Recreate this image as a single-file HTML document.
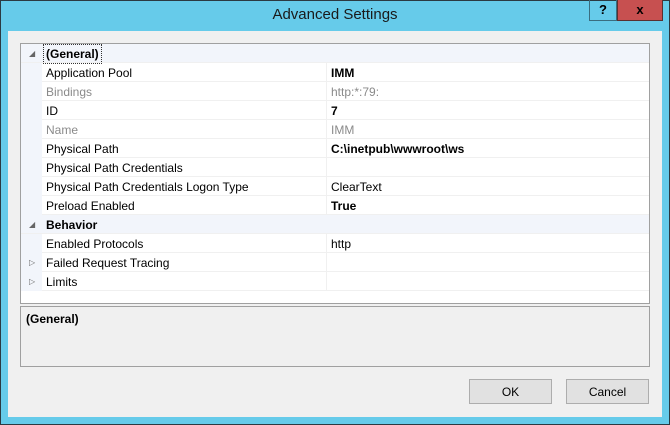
<!DOCTYPE html>
<html><head><style>
*{margin:0;padding:0;box-sizing:border-box}
body{width:670px;height:425px;background:#66cbea;position:relative;overflow:hidden;font-family:"Segoe UI","Liberation Sans",sans-serif;font-size:12px;color:#000}
.frame{position:absolute;left:0;top:0;width:670px;height:425px;border:1px solid #2b3a42}
.title{position:absolute;left:0;top:6px;width:670px;text-align:center;font-size:15px;color:#1a1a1a}
.help{position:absolute;left:589px;top:0;width:28px;height:21px;border:1px solid #3a6d80;border-top:none;text-align:center;font-weight:bold;font-size:13px;line-height:20px}
.close{position:absolute;left:617px;top:0;width:46px;height:21px;background:#c75050;border:1px solid #5a3030;border-top:none;text-align:center;font-weight:bold;font-size:13px;line-height:19px}
.client{position:absolute;left:8px;top:31px;width:654px;height:386px;background:#f0f0f0}
.grid{position:absolute;left:20px;top:43px;width:630px;height:261px;background:#fff;border:1px solid #a0a0a0}
.row{position:absolute;left:0;width:628px;height:19px;border-bottom:1px solid #f0f0f0;line-height:20px}
.gut{position:absolute;left:0;top:0;width:21px;height:19px;background:#f2f5fb}
.hdr{background:#f2f5fb;font-weight:bold}
.n{position:absolute;left:25px;top:0}
.v{position:absolute;left:310px;top:0}
.sep{position:absolute;left:305px;top:0;width:1px;height:19px;background:#f0f0f0}
.g{color:#8a8a8a}
.b{font-weight:bold}
.arr{position:absolute;left:8px;top:0;font-size:8px;color:#666;font-weight:normal}
.desc{position:absolute;left:20px;top:306px;width:630px;height:61px;border:1px solid #a0a0a0;font-weight:bold;padding:5px 5px}
.btn{position:absolute;top:379px;width:83px;height:25px;background:#e1e1e1;border:1px solid #adadad;text-align:center;line-height:24px}
</style></head><body>
<div class="frame"></div>
<div class="title">Advanced Settings</div>
<div class="help">?</div>
<div class="close">x</div>
<div class="client"></div>
<div class="grid">
<div class="row hdr" style="top:0"><span class="arr">◢</span><span class="n" style="outline:1px dotted #333;left:23px;padding:0 2px;line-height:18px;top:1px">(General)</span></div>
<div class="row" style="top:19px"><div class="gut"></div><span class="n">Application Pool</span><div class="sep"></div><span class="v b">IMM</span></div>
<div class="row" style="top:38px"><div class="gut"></div><span class="n g">Bindings</span><div class="sep"></div><span class="v g">http:*:79:</span></div>
<div class="row" style="top:57px"><div class="gut"></div><span class="n">ID</span><div class="sep"></div><span class="v b">7</span></div>
<div class="row" style="top:76px"><div class="gut"></div><span class="n g">Name</span><div class="sep"></div><span class="v g">IMM</span></div>
<div class="row" style="top:95px"><div class="gut"></div><span class="n">Physical Path</span><div class="sep"></div><span class="v b">C:\inetpub\wwwroot\ws</span></div>
<div class="row" style="top:114px"><div class="gut"></div><span class="n">Physical Path Credentials</span><div class="sep"></div></div>
<div class="row" style="top:133px"><div class="gut"></div><span class="n">Physical Path Credentials Logon Type</span><div class="sep"></div><span class="v">ClearText</span></div>
<div class="row" style="top:152px"><div class="gut"></div><span class="n">Preload Enabled</span><div class="sep"></div><span class="v b">True</span></div>
<div class="row hdr" style="top:171px"><span class="arr">◢</span><span class="n">Behavior</span></div>
<div class="row" style="top:190px"><div class="gut"></div><span class="n">Enabled Protocols</span><div class="sep"></div><span class="v">http</span></div>
<div class="row" style="top:209px"><div class="gut"></div><span class="arr">▷</span><span class="n">Failed Request Tracing</span><div class="sep"></div></div>
<div class="row" style="top:228px"><div class="gut"></div><span class="arr">▷</span><span class="n">Limits</span><div class="sep"></div></div>
</div>
<div class="desc">(General)</div>
<div class="btn" style="left:469px">OK</div>
<div class="btn" style="left:566px">Cancel</div>
</body></html>
